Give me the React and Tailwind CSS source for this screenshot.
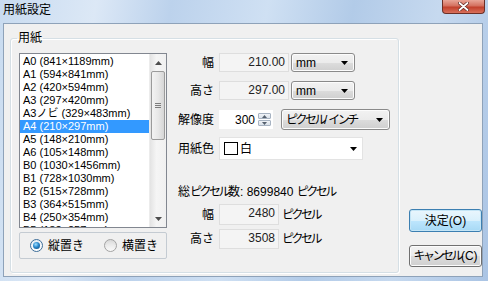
const PAPERS = [
  "A0 (841×1189mm)",
  "A1 (594×841mm)",
  "A2 (420×594mm)",
  "A3 (297×420mm)",
  "A3ノビ (329×483mm)",
  "A4 (210×297mm)",
  "A5 (148×210mm)",
  "A6 (105×148mm)",
  "B0 (1030×1456mm)",
  "B1 (728×1030mm)",
  "B2 (515×728mm)",
  "B3 (364×515mm)",
  "B4 (250×354mm)",
  "B5 (182×257mm)",
];

function DownArrow({ className = "" }) {
  return (
    <svg width="7" height="4" viewBox="0 0 7 4" className={className}>
      <path d="M0 0h7L3.5 4z" fill="#000" />
    </svg>
  );
}

// katakana in the original font is much narrower than Noto's full-width glyphs
function Kana({ children }) {
  return <span className="tracking-[-2.5px]">{children}</span>;
}

function Label({ children }) {
  return <div className="w-[36px] text-right leading-[14px]">{children}</div>;
}

function ReadField({ value, width }) {
  return (
    <div
      className={`${width} h-full ml-[5px] border border-[#dedede] bg-[#f4f4f4] text-right pr-[3px] leading-[17px] text-[#222]`}
    >
      {value}
    </div>
  );
}

function ButtonCombo({ children, width }) {
  return (
    <div
      className={`${width} h-full ml-[2px] flex items-center justify-between pl-[4px] pr-[6px] rounded-[3px] border border-[#8a8a8a] bg-[linear-gradient(#f2f2f2_0%,#ebebeb_50%,#dddddd_51%,#cfcfcf_100%)] shadow-[inset_0_0_0_1px_#fcfcfc]`}
    >
      <span className="leading-[14px] whitespace-nowrap">{children}</span>
      <DownArrow />
    </div>
  );
}

function Radio({ checked, label }) {
  return (
    <div className="flex items-center gap-[5px]">
      <div
        className={`w-[13px] h-[13px] rounded-full border flex items-center justify-center ${
          checked
            ? "border-[#3d6e99] bg-[linear-gradient(#e7eef4,#ffffff)]"
            : "border-[#a3a3a3] bg-[linear-gradient(#d9d9d9,#fafafa)]"
        }`}
      >
        {checked ? (
          <div className="w-[7px] h-[7px] rounded-full bg-[radial-gradient(circle_at_40%_35%,#9fe0ff_0%,#2a88cc_45%,#0c416f_100%)]" />
        ) : (
          <div className="w-[7px] h-[7px] rounded-full bg-[linear-gradient(#e2e2e2,#f6f6f6)]" />
        )}
      </div>
      <span className="leading-[14px]">{label}</span>
    </div>
  );
}

function Scrollbar() {
  return (
    <div className="w-[17px] h-full flex flex-col bg-[linear-gradient(90deg,#e3e3e3,#f5f5f5_40%,#f0f0f0)] border-l border-[#ececec]">
      <div className="h-[17px] flex items-center justify-center">
        <svg width="7" height="4" viewBox="0 0 7 4">
          <path d="M3.5 0L7 4H0z" fill="#4d4d4d" />
        </svg>
      </div>
      <div className="mx-[1px] h-[69px] rounded-[2px] border border-[#9b9b9b] bg-[linear-gradient(90deg,#f3f3f3,#e8e8e8_50%,#d6d6d6)] flex flex-col items-center justify-center gap-[1px]">
        <div className="w-[6px] h-[1px] bg-[#7d7d7d]" />
        <div className="w-[6px] h-[1px] bg-[#7d7d7d]" />
        <div className="w-[6px] h-[1px] bg-[#7d7d7d]" />
      </div>
      <div className="flex-1" />
      <div className="h-[17px] flex items-center justify-center">
        <svg width="7" height="4" viewBox="0 0 7 4">
          <path d="M0 0h7L3.5 4z" fill="#4d4d4d" />
        </svg>
      </div>
    </div>
  );
}

function PaperList() {
  return (
    <div className="w-[148px] h-[175px] border border-[#828790] bg-white flex">
      <div className="flex-1 pt-[1px] overflow-hidden">
        {PAPERS.map((p) => (
          <div
            key={p}
            className={`h-[13px] leading-[13px] pl-[3px] text-[11px] whitespace-nowrap ${
              p.startsWith("A4") ? "bg-[#3399ff] text-white" : ""
            }`}
          >
            {p}
          </div>
        ))}
      </div>
      <Scrollbar />
    </div>
  );
}

function Spinner() {
  return (
    <div className="w-[13px] h-[13px] flex flex-col gap-[1px]">
      {[0, 1].map((i) => (
        <div
          key={i}
          className="flex-1 rounded-[1px] border border-[#a7b3c2] bg-[linear-gradient(#f1f4f8,#d9e1ea)] flex items-center justify-center"
        >
          <svg width="5" height="3" viewBox="0 0 5 3">
            <path d={i === 0 ? "M2.5 0L5 3H0z" : "M0 0h5L2.5 3z"} fill="#55606e" />
          </svg>
        </div>
      ))}
    </div>
  );
}

function TitleBar() {
  return (
    <div className="h-[23px] flex items-start justify-between pl-[3px]">
      <div className="mt-[3px] text-[12px] leading-[14px] text-black">用紙設定</div>
      <div className="w-[43px] h-[14px] mr-[3px] rounded-b-[4px] border border-t-0 border-[#6b2f27] bg-[linear-gradient(#e8a597_0%,#d4705f_45%,#c2402c_55%,#d8705b_100%)] flex items-center justify-center">
        <svg width="11" height="9" viewBox="0 0 11 9">
          <path d="M1.5 1l8 7M9.5 1l-8 7" stroke="#5a2620" strokeWidth="3.2" strokeLinecap="round" />
          <path d="M1.5 1l8 7M9.5 1l-8 7" stroke="#fff" strokeWidth="1.8" strokeLinecap="round" />
        </svg>
      </div>
    </div>
  );
}

export default function App() {
  return (
    <div className="w-[488px] h-[281px] flex flex-col overflow-hidden text-[12px] text-black font-['Liberation_Sans','Noto_Sans_CJK_JP',sans-serif] bg-[linear-gradient(100deg,#c8dbf0_0%,#dce8f6_18%,#bcd2ec_32%,#cfe0f3_50%,#b2cbe8_66%,#c6d9ef_82%,#aac4e4_100%)]">
      <TitleBar />
      <div className="flex-1 ml-[3px] mr-[5px] mb-[4px] border border-[#8ea2b9] bg-[#f0f0f0] flex">
        <fieldset className="ml-[6px] mt-[7px] w-[384px] h-[242px] border border-[#d5dfe5] rounded-[3px] px-[8px] pt-[8px] shadow-[1px_1px_0_#ffffff,inset_1px_1px_0_#ffffff]">
          <legend className="ml-[-2px] px-[1px] leading-[14px]">用紙</legend>
          <div className="flex">
            <div className="flex flex-col gap-[4px]">
              <PaperList />
              <div className="w-[148px] h-[27px] border border-[#c4cbd2] rounded-[2px] flex items-center pl-[10px] gap-[20px]">
                <Radio checked label="縦置き" />
                <Radio label="横置き" />
              </div>
            </div>
            <div className="ml-[11px] flex flex-col">
              <div className="h-[19px] flex items-center">
                <Label>幅</Label>
                <ReadField value="210.00" width="w-[70px]" />
                <ButtonCombo width="w-[64px]">mm</ButtonCombo>
              </div>
              <div className="mt-[9px] h-[19px] flex items-center">
                <Label>高さ</Label>
                <ReadField value="297.00" width="w-[70px]" />
                <ButtonCombo width="w-[64px]">mm</ButtonCombo>
              </div>
              <div className="mt-[9px] h-[21px] flex items-center">
                <Label>解像度</Label>
                <div className="ml-[5px] w-[54px] h-[19px] bg-white flex items-center justify-end pr-[2px] gap-[3px]">
                  <span className="leading-[14px]">300</span>
                  <Spinner />
                </div>
                <div className="ml-[6px] h-full">
                  <ButtonCombo width="w-[109px]">
                    <Kana>ピクセル</Kana>
                    <span className="mr-[1px]">/</span>
                    <Kana>インチ</Kana>
                  </ButtonCombo>
                </div>
              </div>
              <div className="mt-[7px] h-[23px] flex items-center">
                <Label>用紙色</Label>
                <div className="ml-[5px] w-[144px] h-full bg-white border border-[#e3e3e3] flex items-center pl-[4px] pr-[5px]">
                  <div className="w-[14px] h-[13px] border border-black bg-white" />
                  <span className="ml-[2px] leading-[14px]">白</span>
                  <DownArrow className="ml-auto" />
                </div>
              </div>
              <div className="mt-[25px] h-[14px] leading-[14px] whitespace-nowrap">
                総<Kana>ピクセル</Kana>数: 8699840 <Kana>ピクセル</Kana>
              </div>
              <div className="mt-[5px] h-[21px] flex items-center">
                <Label>幅</Label>
                <ReadField value="2480" width="w-[60px]" />
                <span className="ml-[3px] leading-[14px]">
                  <Kana>ピクセル</Kana>
                </span>
              </div>
              <div className="mt-[4px] h-[20px] flex items-center">
                <Label>高さ</Label>
                <ReadField value="3508" width="w-[60px]" />
                <span className="ml-[3px] leading-[14px]">
                  <Kana>ピクセル</Kana>
                </span>
              </div>
            </div>
          </div>
        </fieldset>
        <div className="ml-[10px] pt-[185px] flex flex-col gap-[13px]">
          <button className="w-[73px] h-[23px] rounded-[3px] border border-[#3c7fb1] bg-[linear-gradient(#eaf6fd_0%,#d9f0fc_50%,#bee6fd_51%,#a7d9f5_100%)] shadow-[inset_0_0_0_1px_#c4e5f6] leading-[14px] whitespace-nowrap">
            決定(O)
          </button>
          <button className="w-[73px] h-[22px] rounded-[3px] border border-[#707070] bg-[linear-gradient(#f2f2f2_0%,#ebebeb_50%,#dddddd_51%,#cfcfcf_100%)] shadow-[inset_0_0_0_1px_#fcfcfc] leading-[14px] whitespace-nowrap">
            <Kana>キャンセル</Kana>(C)
          </button>
        </div>
      </div>
    </div>
  );
}
